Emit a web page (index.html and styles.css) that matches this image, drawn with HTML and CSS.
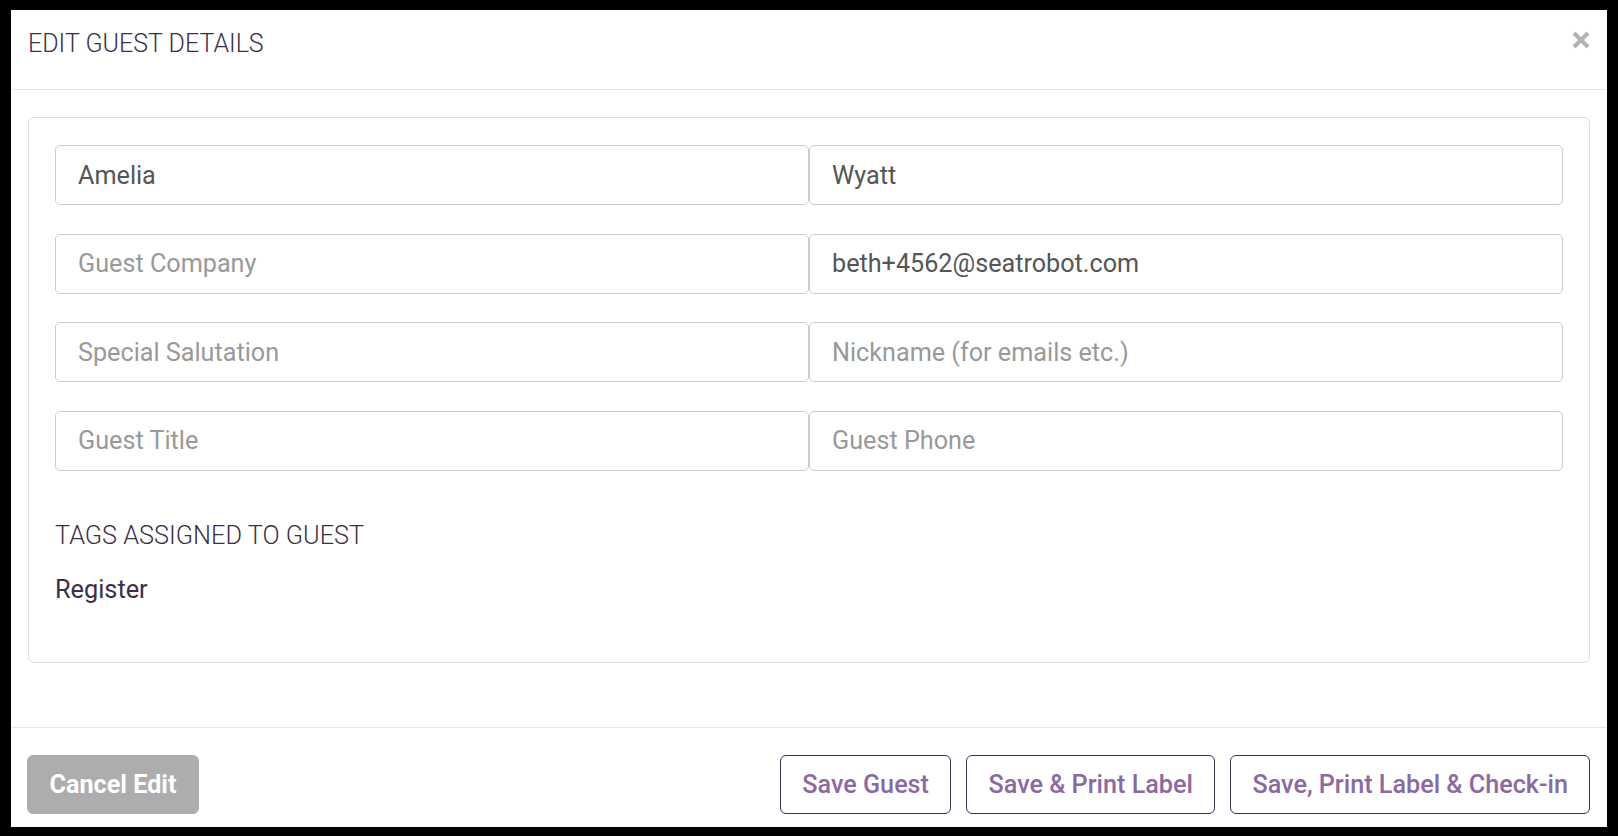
FILE: index.html
```html
<!DOCTYPE html>
<html>
<head>
<meta charset="utf-8">
<title>Edit Guest Details</title>
<link rel="stylesheet" href="styles.css">
</head>
<body>
<div class="modal">
  <div class="modal-header">
    <h4 class="modal-title">EDIT GUEST DETAILS</h4>
    <button class="close" aria-label="Close">
      <svg width="18" height="18" viewBox="0 0 18 18"><path d="M2 2 L16 16 M16 2 L2 16" stroke="#b3b3b3" stroke-width="4.2" fill="none"/></svg>
    </button>
  </div>
  <div class="modal-body">
    <div class="card">
      <div class="fields">
        <input class="field" type="text" value="Amelia">
        <input class="field" type="text" value="Wyatt">
        <input class="field" type="text" placeholder="Guest Company">
        <input class="field" type="text" value="beth+4562@seatrobot.com">
        <input class="field" type="text" placeholder="Special Salutation">
        <input class="field" type="text" placeholder="Nickname (for emails etc.)">
        <input class="field" type="text" placeholder="Guest Title">
        <input class="field" type="text" placeholder="Guest Phone">
      </div>
      <div class="tags-label">TAGS ASSIGNED TO GUEST</div>
      <div class="tag">Register</div>
    </div>
  </div>
  <div class="modal-footer">
    <button class="btn btn-cancel">Cancel Edit</button>
    <div class="actions">
      <button class="btn btn-outline">Save Guest</button>
      <button class="btn btn-outline">Save &amp; Print Label</button>
      <button class="btn btn-outline">Save, Print Label &amp; Check-in</button>
    </div>
  </div>
</div>
</body>
</html>
```

FILE: styles.css
```css
html, body {
  margin: 0;
  padding: 0;
  background: #000;
  font-family: Roboto, "Liberation Sans", Arial, sans-serif;
}

.modal {
  margin: 10px 11px 0 11px;
  width: 1596px;
  height: 817px;
  background: #fff;
  display: flex;
  flex-direction: column;
  box-sizing: border-box;
}

.modal-header {
  height: 80px;
  box-sizing: border-box;
  border-bottom: 1px solid #e5e5e5;
  padding: 18.5px 17px 0 17px;
  display: flex;
  justify-content: space-between;
  align-items: flex-start;
}

.modal-title {
  margin: 0;
  font-size: 25px;
  font-weight: 300;
  line-height: 1.2;
  color: #3b3047;
}

.close {
  border: 0;
  background: transparent;
  padding: 0;
  margin-top: 2.5px;
  width: 18px;
  height: 18px;
  cursor: pointer;
  display: flex;
}

.modal-body {
  padding: 27px 17px 64px 17px;
}

.card {
  border: 1px solid #dedede;
  border-radius: 6px;
  padding: 27px 26px 56px 26px;
}

.fields {
  display: grid;
  grid-template-columns: 1fr 1fr;
  row-gap: 28.67px;
  column-gap: 0;
}

.field {
  height: 60px;
  box-sizing: border-box;
  border: 1px solid #cccccc;
  border-radius: 5px;
  padding: 0 22px;
  font-family: Roboto, "Liberation Sans", Arial, sans-serif;
  font-size: 25.2px;
  color: #555555;
  background: #fff;
  outline: none;
  width: 100%;
}

.field::placeholder {
  color: #999999;
}

.tags-label {
  margin-top: 50px;
  font-size: 25.3px;
  font-weight: 300;
  line-height: 1.2;
  color: #3b3047;
}

.tag {
  margin-top: 24px;
  font-size: 25.3px;
  line-height: 1.2;
  color: #3b3047;
}

.modal-footer {
  border-top: 1px solid #e5e5e5;
  padding: 27px 17px 0 16px;
  display: flex;
  justify-content: space-between;
  align-items: flex-start;
}

.actions {
  display: flex;
  gap: 15.5px;
}

.btn {
  height: 59px;
  box-sizing: border-box;
  border-radius: 6px;
  font-family: Roboto, "Liberation Sans", Arial, sans-serif;
  font-size: 25.2px;
  font-weight: 500;
  padding: 0 21px;
  cursor: pointer;
}

.btn-cancel {
  width: 172px;
  background: #adadad;
  border: 1px solid #adadad;
  color: #fff;
  font-weight: 700;
  padding: 0;
}

.btn-outline {
  background: #fff;
  border: 1px solid #3d3050;
  color: #8a6aa0;
}
```
